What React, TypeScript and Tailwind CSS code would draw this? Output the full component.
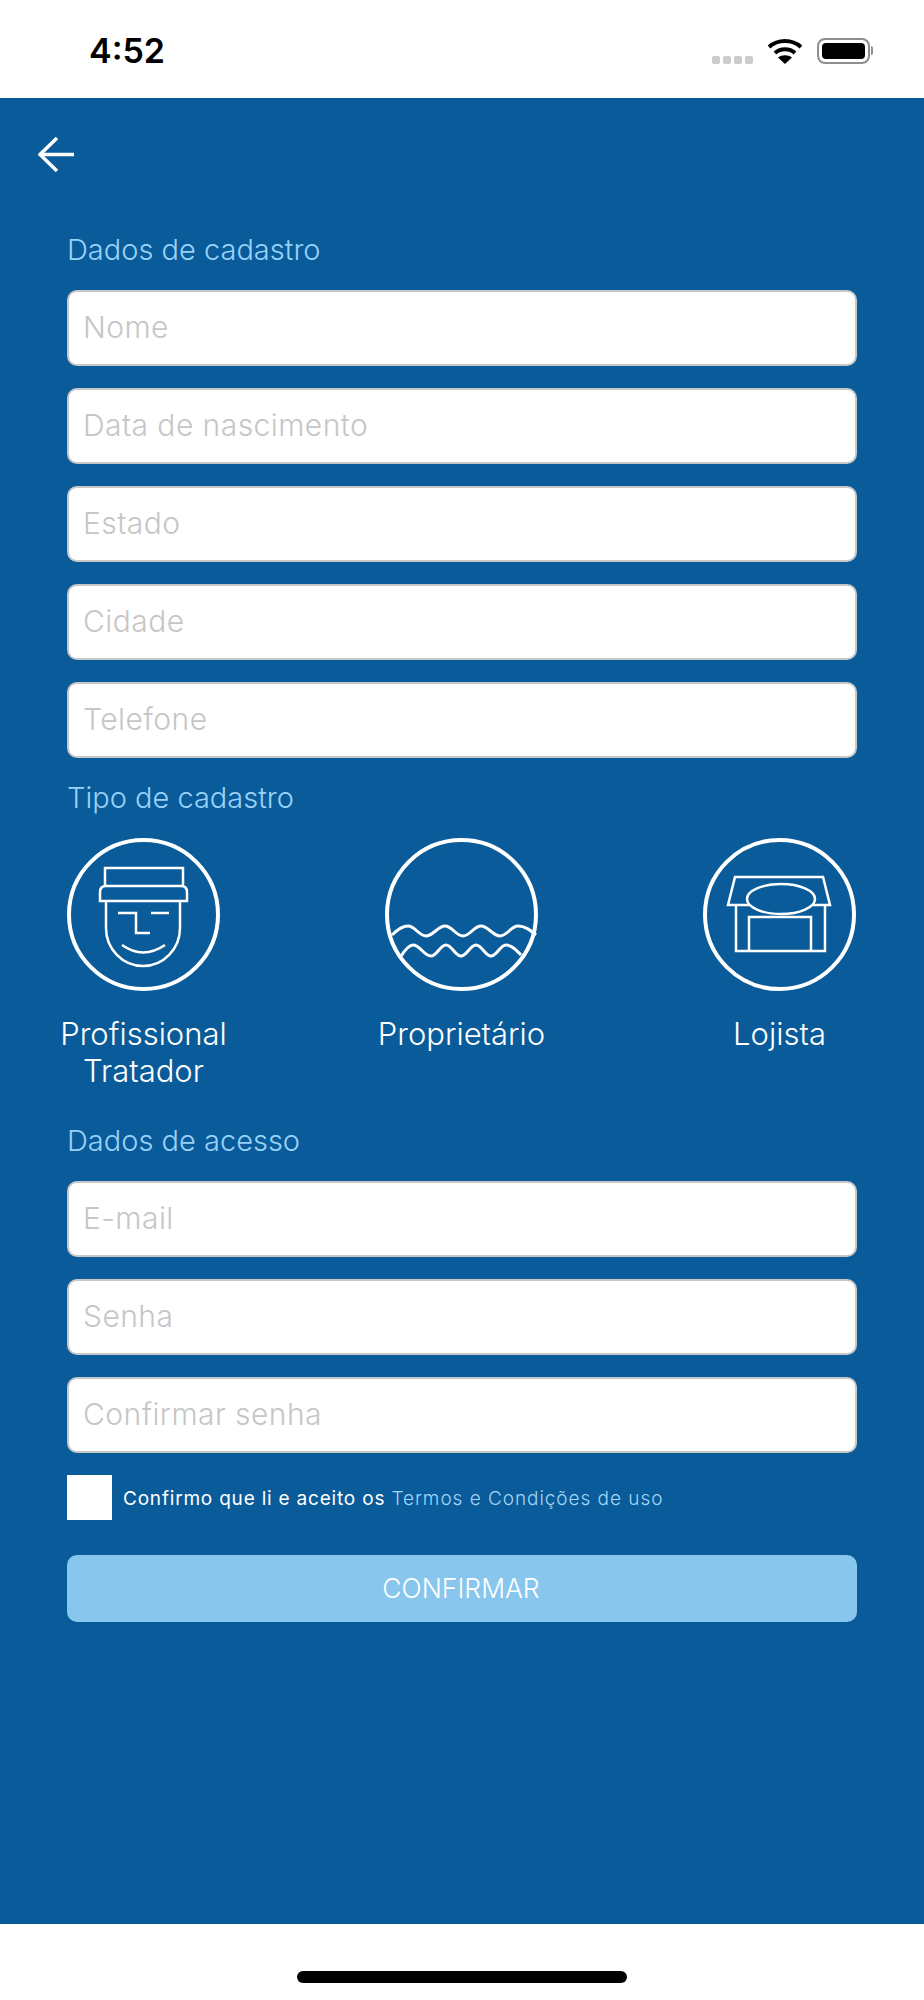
const FONT = "font-['Inter',sans-serif]";

function Field({ placeholder }: { placeholder: string }) {
  return (
    <input
      placeholder={placeholder}
      className="block h-[76px] w-full rounded-[10px] border-2 border-[#c8c8c8] bg-white px-[14px] pb-[3px] text-[30px] font-light tracking-[0.45px] text-[#333] outline-none placeholder:text-[#c6c6c6]"
    />
  );
}

function SectionLabel({ children }: { children: string }) {
  return <h2 className="text-[29px] leading-[34px] font-light text-[#98d2f7]">{children}</h2>;
}

function RoleOption({ label, children }: { label: string[]; children: React.ReactNode }) {
  return (
    <div className="flex w-[153px] flex-col items-center">
      <div className="size-[153px] rounded-full border-4 border-white">
        <svg
          viewBox="0 0 153 153"
          className="-m-1 size-[153px]"
          fill="none"
          stroke="#fff"
          strokeWidth="2.5"
        >
          {children}
        </svg>
      </div>
      <p className="mt-[24px] text-center text-[31px] leading-[37px] font-light whitespace-nowrap text-white">
        {label.map((line) => (
          <span key={line} className="block">
            {line}
          </span>
        ))}
      </p>
    </div>
  );
}

function StatusIcons() {
  return (
    <div className="flex items-center">
      <div className="mt-[19px] flex gap-[3px]">
        <span className="size-[8px] rounded-[2px] bg-[#cccccc]" />
        <span className="size-[8px] rounded-[2px] bg-[#cccccc]" />
        <span className="size-[8px] rounded-[2px] bg-[#cccccc]" />
        <span className="size-[8px] rounded-[2px] bg-[#cccccc]" />
      </div>
      <svg width="36" height="26" viewBox="0 0 36 26" className="ml-[14px]" fill="none" stroke="#000" strokeWidth="4">
        <path d="M2 9 C11 1 25 1 34 9" />
        <path d="M8 15 C13.5 10 22.5 10 28 15" />
        <path d="M18 26 L11 19.5 C15 16.5 21 16.5 25 19.5 Z" fill="#000" stroke="none" />
      </svg>
      <div className="ml-[14px] flex items-center">
        <div className="h-[26px] w-[53px] rounded-[8px] border-2 border-[#8e8e8e] p-[3px]">
          <div className="h-full w-full rounded-[4px] bg-black" />
        </div>
        <div className="ml-[1px] h-[9px] w-[2px] rounded-r-full bg-[#8e8e8e]" />
      </div>
    </div>
  );
}

export default function App() {
  return (
    <div className={`flex h-[2000px] flex-col bg-white ${FONT}`}>
      <header className="flex h-[98px] shrink-0 items-start justify-between pt-[35px] pr-[51px] pl-[89px]">
        <span className="text-[34px] leading-[32px] font-semibold text-black">4:52</span>
        <div className="pt-[2px]">
          <StatusIcons />
        </div>
      </header>

      <main className="flex-1 bg-[#0a5b9a] px-[67px] pt-[39px]">
        <button className="-ml-[29px] block h-[35px] w-[36px]">
          <svg viewBox="0 0 36 35" className="size-full" fill="none" stroke="#fff" strokeWidth="3.5">
            <path d="M36 17.5 H2" />
            <path d="M19 1 L2 17.5 L19 34" />
          </svg>
        </button>

        <div className="mt-[61px]">
          <SectionLabel>Dados de cadastro</SectionLabel>
        </div>
        <div className="mt-[23px] flex flex-col gap-[22px]">
          <Field placeholder="Nome" />
          <Field placeholder="Data de nascimento" />
          <Field placeholder="Estado" />
          <Field placeholder="Cidade" />
          <Field placeholder="Telefone" />
        </div>

        <div className="mt-[23px]">
          <SectionLabel>Tipo de cadastro</SectionLabel>
        </div>
        <div className="mt-[23px] flex h-[252px] justify-between pr-px">
          <RoleOption label={["Profissional", "Tratador"]}>
            <path d="M38 47 V30 H116 V47" />
            <path d="M33 63 V54 Q33 48 39 48 H114 Q120 48 120 54 V63 Z" />
            <path d="M39 63 V90 A37 38 0 0 0 113 90 V63" />
            <path d="M51 75 H69 V95 H83" />
            <path d="M84 75 H102" />
            <path d="M55 107 Q76 122 98 107" />
          </RoleOption>
          <RoleOption label={["Proprietário"]}>
            <g strokeWidth="3">
              <path d="M7 97 C13 91 18 88 23 88 C30 88 34 98 41 98 C48 98 53 88 60 88 C67 88 71 98 78 98 C85 98 89 88 96 88 C103 88 108 98 115 98 C122 98 126 88 133 88 C140 88 145 92 151 97" />
              <path d="M16 118 C20 112 24 107 28 107 C35 107 39 118 46 118 C52 118 55 107 61 107 C67 107 70 118 76 118 C82 118 85 107 91 107 C97 107 100 118 106 118 C112 118 115 107 121 107 C127 107 131 112 136 117" />
            </g>
          </RoleOption>
          <RoleOption label={["Lojista"]}>
            <path d="M32 39 H120 L127 67 H25 Z" />
            <ellipse cx="78" cy="61" rx="34" ry="15" fill="#0a5b9a" />
            <path d="M33 67 V113 H122 V67" />
            <path d="M46 113 V79 H108 V113" />
          </RoleOption>
        </div>

        <div className="mt-[34px]">
          <SectionLabel>Dados de acesso</SectionLabel>
        </div>
        <div className="mt-[23px] flex flex-col gap-[22px]">
          <Field placeholder="E-mail" />
          <Field placeholder="Senha" />
          <Field placeholder="Confirmar senha" />
        </div>

        <div className="mt-[22px] flex items-center gap-[11px]">
          <div className="h-[45px] w-[45px] bg-white" />
          <p className="pt-[3px] text-[19px] font-normal tracking-[0.8px] text-white">
            Confirmo que li e aceito os{" "}
            <span className="font-light tracking-[0.95px] text-[#a3d6f7]">Termos e Condições de uso</span>
          </p>
        </div>

        <button className="mt-[35px] h-[67px] w-full rounded-[10px] bg-[#88c6ee] pr-[2px] text-[26.5px] font-light text-white">
          CONFIRMAR
        </button>
      </main>

      <footer className="flex h-[76px] shrink-0 justify-center pt-[47px]">
        <div className="h-[12px] w-[330px] rounded-full bg-black" />
      </footer>
    </div>
  );
}
